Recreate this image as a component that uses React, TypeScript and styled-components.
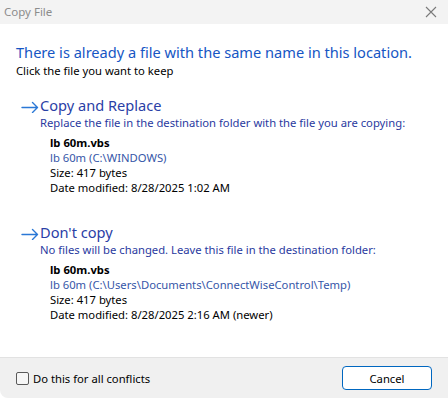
import React from "react";
import styled, { createGlobalStyle } from "styled-components";

const GlobalStyle = createGlobalStyle`
  html, body {
    margin: 0;
    padding: 0;
    background: #ffffff;
  }
  body {
    font-family: "Noto Sans", "Liberation Sans", sans-serif;
  }
`;

type FileInfo = {
  name: string;
  location: string;
  size: string;
  modified: string;
};

type Choice = {
  title: string;
  description: string;
  file: FileInfo;
};

const choices: Choice[] = [
  {
    title: "Copy and Replace",
    description:
      "Replace the file in the destination folder with the file you are copying:",
    file: {
      name: "lb 60m.vbs",
      location: "lb 60m (C:\\WINDOWS)",
      size: "Size: 417 bytes",
      modified: "Date modified: 8/28/2025 1:02 AM",
    },
  },
  {
    title: "Don't copy",
    description:
      "No files will be changed. Leave this file in the destination folder:",
    file: {
      name: "lb 60m.vbs",
      location: "lb 60m (C:\\Users\\Documents\\ConnectWiseControl\\Temp)",
      size: "Size: 417 bytes",
      modified: "Date modified: 8/28/2025 2:16 AM (newer)",
    },
  },
];

const Arrow = () => (
  <svg width="18" height="12" viewBox="0 0 18 12" fill="none">
    <path
      d="M1 6.5H16.5M11.5 1.5L16.5 6.5L11.5 11.5"
      stroke="#2a78d6"
      strokeWidth="1.4"
      strokeLinecap="round"
      strokeLinejoin="round"
    />
  </svg>
);

const CloseIcon = () => (
  <svg width="12" height="12" viewBox="0 0 12 12">
    <path d="M1 1L11 11M11 1L1 11" stroke="#7a7a7a" strokeWidth="1.1" />
  </svg>
);

export default function App() {
  return (
    <>
      <GlobalStyle />
      <Window>
        <TitleBar>
          <Title>Copy File</Title>
          <CloseButton>
            <CloseIcon />
          </CloseButton>
        </TitleBar>
        <Body>
          <Heading>There is already a file with the same name in this location.</Heading>
          <Hint>Click the file you want to keep</Hint>
          <ChoiceList>
            {choices.map((c) => (
              <ChoiceRow key={c.title}>
                <ArrowSlot>
                  <Arrow />
                </ArrowSlot>
                <ChoiceBody>
                  <ChoiceTitle>{c.title}</ChoiceTitle>
                  <ChoiceText>{c.description}</ChoiceText>
                  <FileBlock>
                    <FileName>{c.file.name}</FileName>
                    <FileLocation>{c.file.location}</FileLocation>
                    <FileLine>{c.file.size}</FileLine>
                    <FileLine>{c.file.modified}</FileLine>
                  </FileBlock>
                </ChoiceBody>
              </ChoiceRow>
            ))}
          </ChoiceList>
        </Body>
        <Footer>
          <CheckLabel>
            <CheckBox />
            <span>Do this for all conflicts</span>
          </CheckLabel>
          <CancelButton>Cancel</CancelButton>
        </Footer>
      </Window>
    </>
  );
}

const Window = styled.div`
  width: 448px;
  height: 398px;
  display: flex;
  flex-direction: column;
  background: #ffffff;
  overflow: hidden;
  border-bottom-left-radius: 8px;
`;

const TitleBar = styled.div`
  height: 24px;
  flex-shrink: 0;
  display: flex;
  align-items: center;
  justify-content: space-between;
  background: #f3f3f3;
  padding: 0 0 0 4px;
`;

const Title = styled.span`
  font-size: 11.5px;
  color: #8c8c8c;
  margin-top: -2px;
`;

const CloseButton = styled.div`
  width: 30px;
  height: 24px;
  display: flex;
  align-items: center;
  justify-content: center;
  margin-right: 2px;
`;

const Body = styled.div`
  flex: 1;
  padding: 18px 16px 0 16px;
`;

const Heading = styled.div`
  font-size: 14.6px;
  line-height: 20px;
  color: #1656c4;
  white-space: nowrap;
`;

const Hint = styled.div`
  font-size: 11.25px;
  line-height: 16px;
  margin-top: 1px;
  color: #000000;
`;

const ChoiceList = styled.div`
  display: flex;
  flex-direction: column;
  gap: 28px;
  margin-top: 17px;
`;

const ChoiceRow = styled.div`
  display: flex;
  align-items: flex-start;
`;

const ArrowSlot = styled.div`
  width: 19px;
  padding: 5px 0 0 5px;
  display: flex;
`;

const ChoiceBody = styled.div`
  display: flex;
  flex-direction: column;
`;

const ChoiceTitle = styled.div`
  font-size: 14.6px;
  line-height: 19px;
  color: #2a40a6;
`;

const ChoiceText = styled.div`
  font-size: 11.25px;
  line-height: 16px;
  color: #2a3aa0;
  white-space: nowrap;
`;

const FileBlock = styled.div`
  display: flex;
  flex-direction: column;
  padding: 4px 0 0 10px;
`;

const FileLine = styled.div`
  font-size: 11.25px;
  line-height: 15px;
  color: #000000;
  white-space: nowrap;
`;

const FileName = styled(FileLine)`
  font-weight: 700;
`;

const FileLocation = styled(FileLine)`
  color: #3656a8;
`;

const Footer = styled.div`
  height: 40px;
  flex-shrink: 0;
  display: flex;
  align-items: center;
  justify-content: space-between;
  background: #f0f0f0;
  border-top: 1px solid #e2e2e2;
  padding: 0 16px;
`;

const CheckLabel = styled.label`
  display: flex;
  align-items: center;
  gap: 4px;
  font-size: 11.25px;
  color: #000000;
`;

const CheckBox = styled.span`
  width: 11px;
  height: 11px;
  border: 1px solid #5a5a5a;
  border-radius: 2px;
  background: #f6f6f6;
`;

const CancelButton = styled.button`
  width: 90px;
  height: 24px;
  font-family: inherit;
  font-size: 11.25px;
  color: #000000;
  background: #ffffff;
  border: 1px solid #0067c0;
  border-radius: 4px;
  padding: 0;
`;
